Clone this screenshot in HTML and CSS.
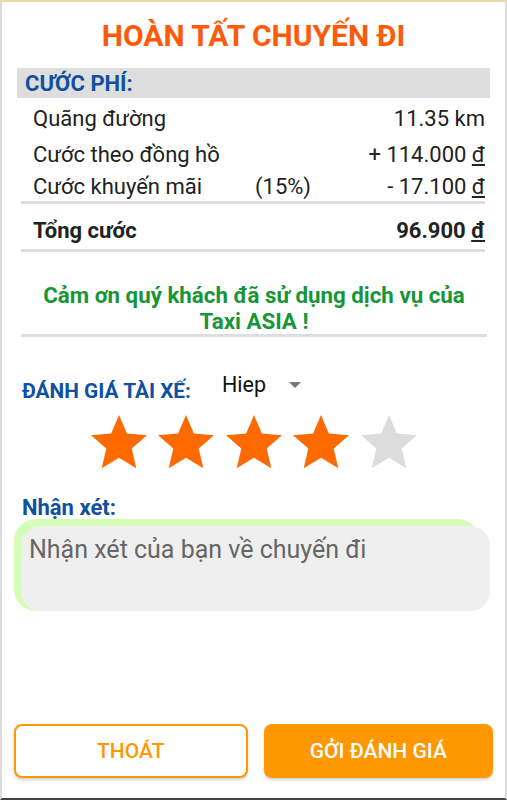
FILE: index.html
```html
<!DOCTYPE html>
<html lang="vi">
<head>
<meta charset="utf-8">
<link rel="stylesheet" href="styles.css">
</head>
<body>
<div class="screen">
  <h1 class="title">HOÀN TẤT CHUYẾN ĐI</h1>
  <div class="section-bar">CƯỚC PHÍ:</div>
  <div class="fees">
    <div class="row r1"><span class="label">Quãng đường</span><span class="value">11.35 km</span></div>
    <div class="row r2"><span class="label">Cước theo đồng hồ</span><span class="value">+ 114.000 <u>đ</u></span></div>
    <div class="row r3"><span class="label fixed">Cước khuyến mãi</span><span class="pct">(15%)</span><span class="value">- 17.100 <u>đ</u></span></div>
  </div>
  <div class="total">
    <div class="row bold"><span class="label">Tổng cước</span><span class="value">96.900 <u>đ</u></span></div>
  </div>
  <div class="thanks">Cảm ơn quý khách đã sử dụng dịch vụ của<br>Taxi ASIA !</div>
  <div class="rate-row">
    <span class="rate-label">ĐÁNH GIÁ TÀI XẾ:</span>
    <span class="driver">Hiep</span>
    <span class="caret"></span>
  </div>
  <div class="stars">
    <svg class="star on" viewBox="2 2 20 19.3"><path d="M12 17.27L18.18 21l-1.64-7.03L22 9.24l-7.19-.61L12 2 9.19 8.63 2 9.24l5.46 4.73L5.82 21z"/></svg>
    <svg class="star on" viewBox="2 2 20 19.3"><path d="M12 17.27L18.18 21l-1.64-7.03L22 9.24l-7.19-.61L12 2 9.19 8.63 2 9.24l5.46 4.73L5.82 21z"/></svg>
    <svg class="star on" viewBox="2 2 20 19.3"><path d="M12 17.27L18.18 21l-1.64-7.03L22 9.24l-7.19-.61L12 2 9.19 8.63 2 9.24l5.46 4.73L5.82 21z"/></svg>
    <svg class="star on" viewBox="2 2 20 19.3"><path d="M12 17.27L18.18 21l-1.64-7.03L22 9.24l-7.19-.61L12 2 9.19 8.63 2 9.24l5.46 4.73L5.82 21z"/></svg>
    <svg class="star off" viewBox="2 2 20 19.3"><path d="M12 17.27L18.18 21l-1.64-7.03L22 9.24l-7.19-.61L12 2 9.19 8.63 2 9.24l5.46 4.73L5.82 21z"/></svg>
  </div>
  <div class="comment-label">Nhận xét:</div>
  <div class="comment-wrap">
    <div class="comment">Nhận xét của bạn về chuyến đi</div>
  </div>
  <div class="spacer"></div>
  <div class="buttons">
    <div class="btn outline">THOÁT</div>
    <div class="btn filled">GỞI ĐÁNH GIÁ</div>
  </div>
</div>
</body>
</html>
```
FILE: styles.css
```css
* { box-sizing: border-box; }
html, body { margin: 0; padding: 0; }
body {
  font-family: Roboto, "Noto Sans", sans-serif;
  background: #fff;
}
.screen {
  width: 507px;
  height: 800px;
  border-left: 2px solid #dcdcdc;
  border-right: 2px solid #dcdcdc;
  border-top: 2px solid #ecd9a4;
  border-bottom: 2px solid #444;
  display: flex;
  flex-direction: column;
  padding: 0 15px;
}
.title {
  margin: 16px 0 0 0;
  text-align: center;
  color: #ff5a0a;
  font-size: 30px;
  line-height: 36px;
  font-weight: 700;
}
.section-bar {
  margin-top: 14px;
  height: 30px;
  background: #dedede;
  color: #0f50a0;
  font-weight: 700;
  font-size: 22px;
  line-height: 31px;
  padding-left: 8px;
}
.fees {
  margin: 1px 5px 0 4px;
  padding: 0 0 0 12px;
  border-bottom: 3px solid #dedede;
}
.row {
  display: flex;
  align-items: center;
  font-size: 22px;
  color: #222;
}
.fees .r1 { height: 38px; }
.fees .r2 { height: 34px; }
.fees .r3 { height: 30px; }
.row .label { flex: 1 1 auto; }
.row .label.fixed { flex: 0 0 222px; }
.row .pct { flex: 1 1 auto; }
.row .value { text-align: right; }
.total {
  margin: 0 5px 0 4px;
  padding: 10px 0 2px 12px;
  border-bottom: 3px solid #dedede;
}
.total .row { height: 33px; }
.bold { font-weight: 700; }
.thanks {
  margin: 30px 3px 0 4px;
  border-bottom: 3px solid #dedede;
  text-align: center;
  color: #179638;
  font-weight: 700;
  font-size: 22.3px;
  line-height: 26px;
}
.rate-row {
  display: flex;
  align-items: flex-start;
  margin-top: 35px;
  padding-left: 5px;
  height: 31px;
}
.rate-label {
  color: #0f50a0;
  font-weight: 700;
  font-size: 20.8px;
  line-height: 24px;
  margin-top: 7px;
  width: 200px;
}
.driver {
  font-size: 21.5px;
  color: #111;
  line-height: 26px;
  width: 67px;
}
.caret {
  margin-top: 10px;
  width: 0; height: 0;
  border-left: 6px solid transparent;
  border-right: 6px solid transparent;
  border-top: 6px solid #777;
}
.stars {
  display: flex;
  justify-content: center;
  gap: 11.5px;
  margin-top: 12px;
}
.star { width: 56px; height: 54px; display: block; }
.star.on { fill: #ff6a00; }
.star.off { fill: #dcdcdc; }
.comment-label {
  margin-top: 27px;
  padding-left: 5px;
  color: #0f50a0;
  font-weight: 700;
  font-size: 22px;
  line-height: 24px;
}
.comment-wrap {
  margin-top: -1px;
  margin-left: -3px;
  margin-right: 10px;
  background: #d6fdb8;
  border-radius: 22px;
  height: 92px;
  padding: 7px 0 0 7px;
}
.comment {
  height: 85px;
  margin-right: -10px;
  background: #efefef;
  border-radius: 20px;
  color: #666;
  font-size: 25px;
  line-height: 30px;
  padding: 9px 8px;
}
.spacer { flex: 1 1 auto; }
.buttons {
  display: flex;
  gap: 16px;
  margin: 0 -3px 20px -3px;
}
.btn {
  flex: 1 1 0;
  height: 54px;
  border-radius: 8px;
  display: flex;
  align-items: center;
  justify-content: center;
  font-size: 21px;
  font-weight: 500;
  box-shadow: 0 2px 3px rgba(0,0,0,0.18);
}
.btn.outline {
  border: 2px solid #ff9800;
  color: #ff9800;
  background: #fff;
}
.btn.filled {
  background: #ff9800;
  color: #fff;
}
```
